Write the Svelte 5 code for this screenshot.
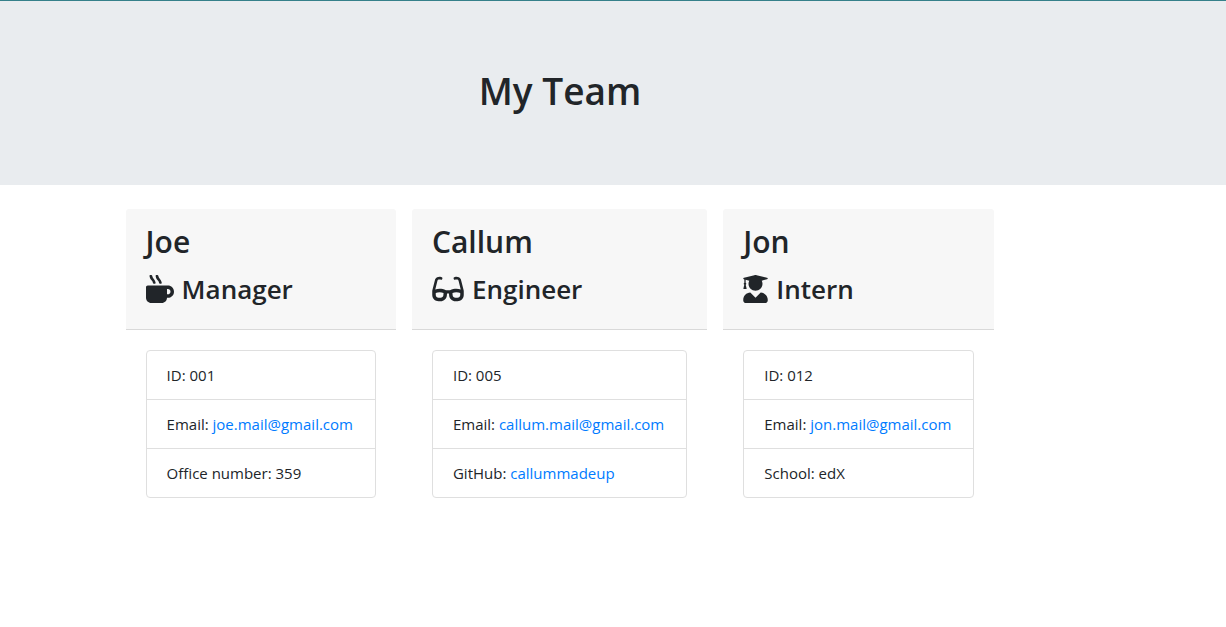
<script>
  const icons = {
    mug: {
      width: 28,
      viewBox: '0 0 512 512',
      path: 'M127.1 146.5c1.3 7.7 8 13.5 16 13.5h16.5c9.8 0 17.6-8.5 16.3-18-3.8-28.2-16.4-54.2-36.6-74.7-14.4-14.7-23.6-33.3-26.4-53.5C111.8 5.9 105 0 96.8 0H80.4C70.6 0 63 8.5 64.1 18c3.9 31.9 18 61.3 40.6 84.4 12 12.2 19.7 27.5 22.4 44.1zm112 0c1.3 7.7 8 13.5 16 13.5h16.5c9.8 0 17.6-8.5 16.3-18-3.8-28.2-16.4-54.2-36.6-74.7-14.4-14.7-23.6-33.3-26.4-53.5C223.8 5.9 217 0 208.8 0h-16.4c-9.8 0-17.5 8.5-16.3 18 3.9 31.9 18 61.3 40.6 84.4 12 12.2 19.7 27.5 22.4 44.1zM400 192H32c-17.7 0-32 14.3-32 32v192c0 53 43 96 96 96h192c53 0 96-43 96-96h16c61.8 0 112-50.2 112-112s-50.2-112-112-112zm0 160h-16v-96h16c26.5 0 48 21.5 48 48s-21.5 48-48 48z'
    },
    glasses: {
      width: 32,
      viewBox: '0 0 576 512',
      path: 'M574.1 280.37L528.75 98.66c-5.91-23.7-21.59-44.05-43-55.81-21.44-11.73-46.97-14.11-70.19-6.33l-15.25 5.08c-8.39 2.79-12.92 11.86-10.12 20.24l5.06 15.18c2.79 8.38 11.85 12.91 20.23 10.12l13.18-4.39c10.87-3.62 23-3.57 33.16 1.73 10.29 5.37 17.57 14.56 20.37 25.82l38.46 153.82c-22.19-6.81-49.79-12.46-81.2-12.46-34.77 0-73.98 7.02-114.85 26.74h-73.18c-40.87-19.74-80.08-26.75-114.86-26.75-31.42 0-59.02 5.65-81.21 12.46l38.46-153.83c2.79-11.25 10.09-20.45 20.38-25.81 10.16-5.3 22.28-5.35 33.15-1.73l13.17 4.39c8.38 2.79 17.44-1.74 20.23-10.12l5.06-15.18c2.8-8.38-1.73-17.45-10.12-20.24l-15.25-5.08c-23.22-7.78-48.75-5.41-70.19 6.33-21.41 11.77-37.09 32.11-43 55.8L1.9 280.37A64.218 64.218 0 0 0 0 295.86v70.25C0 429.01 51.58 480 115.2 480h37.12c60.28 0 110.37-45.94 114.88-105.37l2.93-38.63h35.75l2.93 38.63C313.31 434.06 363.4 480 423.68 480h37.12c63.62 0 115.2-50.99 115.2-113.88v-70.25c0-5.23-.64-10.43-1.9-15.5zm-370.72 89.42c-1.97 25.91-24.4 46.21-51.06 46.21H115.2C86.97 416 64 393.62 64 366.11v-37.54c18.12-6.49 43.42-12.92 72.58-12.92 23.86 0 47.26 4.33 69.93 12.92l-3.13 41.22zM512 366.12c0 27.51-22.97 49.88-51.2 49.88h-37.12c-26.67 0-49.1-20.3-51.06-46.21l-3.13-41.22c22.67-8.59 46.08-12.92 69.95-12.92 29.12 0 54.43 6.44 72.55 12.93v37.54z'
    },
    graduate: {
      width: 25,
      viewBox: '0 0 448 512',
      path: 'M319.4 320.6L224 416l-95.4-95.4C57.1 323.7 0 382.2 0 454.4v9.6c0 26.5 21.5 48 48 48h352c26.5 0 48-21.5 48-48v-9.6c0-72.2-57.1-130.7-128.6-133.8zM13.6 79.8l6.4 1.5v58.4c-7 4.2-12 11.5-12 20.3 0 8.4 4.6 15.4 11.1 19.7L3.5 242c-1.7 6.9 2.1 14 7.6 14h41.8c5.5 0 9.3-7.1 7.6-14l-15.6-62.3C51.4 175.4 56 168.4 56 160c0-8.8-5-16.1-12-20.3V87.1l66 15.9c-8.6 17.2-14 36.4-14 57 0 70.7 57.3 128 128 128s128-57.3 128-128c0-20.6-5.3-39.8-14-57l96.3-23.2c18.2-4.4 18.2-27.1 0-31.5l-190.4-46c-13-3.1-26.7-3.1-39.7 0L13.6 48.2c-18.1 4.4-18.1 27.2 0 31.6z'
    }
  };

  const team = [
    {
      name: 'Joe', role: 'Manager', icon: icons.mug, id: '001',
      email: 'joe.mail@gmail.com', label: 'Office number', value: '359'
    },
    {
      name: 'Callum', role: 'Engineer', icon: icons.glasses, id: '005',
      email: 'callum.mail@gmail.com', label: 'GitHub', value: 'callummadeup',
      href: 'https://github.com/callummadeup'
    },
    {
      name: 'Jon', role: 'Intern', icon: icons.graduate, id: '012',
      email: 'jon.mail@gmail.com', label: 'School', value: 'edX'
    }
  ];
</script>

<header class="hero">
  <h1>My Team</h1>
</header>

<main class="team">
  {#each team as member}
    <article class="card">
      <div class="card-header">
        <h2>{member.name}</h2>
        <h3>
          <svg width={member.icon.width} height="28" viewBox={member.icon.viewBox} aria-hidden="true">
            <path d={member.icon.path} />
          </svg>
          {member.role}
        </h3>
      </div>
      <div class="card-body">
        <ul>
          <li>ID: {member.id}</li>
          <li>Email: <a href="mailto:{member.email}">{member.email}</a></li>
          <li>
            {member.label}:
            {#if member.href}<a href={member.href}>{member.value}</a>{:else}{member.value}{/if}
          </li>
        </ul>
      </div>
    </article>
  {/each}
</main>

<style>
  :global(body) {
    margin: 0;
    background: #fff;
    color: #212529;
    font: 400 15px/24px 'Segoe UI', 'Open Sans', 'Noto Sans', sans-serif;
  }

  h1, h2, h3, ul {
    margin: 0;
    padding: 0;
    font-weight: 600;
  }

  .hero {
    padding: 66px 106px 70px 0;
    border-top: 1px solid #35808a;
    background: #e9ecef;
    text-align: center;
  }

  h1 {
    font-size: 37px;
    line-height: 48px;
  }

  .team {
    display: flex;
    flex-wrap: wrap;
    justify-content: center;
    gap: 16px;
    padding: 24px 106px 24px 0;
  }

  .card-header {
    display: flex;
    flex-direction: column;
    gap: 10px;
    padding: 13px 20px 23px;
    border-bottom: 1px solid #d9d9d9;
    border-radius: 3px 3px 0 0;
    background: #f7f7f7;
  }

  h2 {
    font-size: 30px;
    line-height: 40px;
  }

  h3 {
    display: flex;
    align-items: center;
    gap: 8px;
    font-size: 26px;
    line-height: 34px;
  }

  svg {
    fill: currentColor;
  }

  .card-body {
    padding: 20px;
  }

  ul {
    border: 1px solid #dfdfdf;
    border-radius: 4px;
    font-weight: 400;
    list-style: none;
  }

  li {
    padding: 12px 22px 12px 20px;
  }

  li + li {
    border-top: 1px solid #dfdfdf;
  }

  a {
    color: #007bff;
    text-decoration: none;
  }
</style>
